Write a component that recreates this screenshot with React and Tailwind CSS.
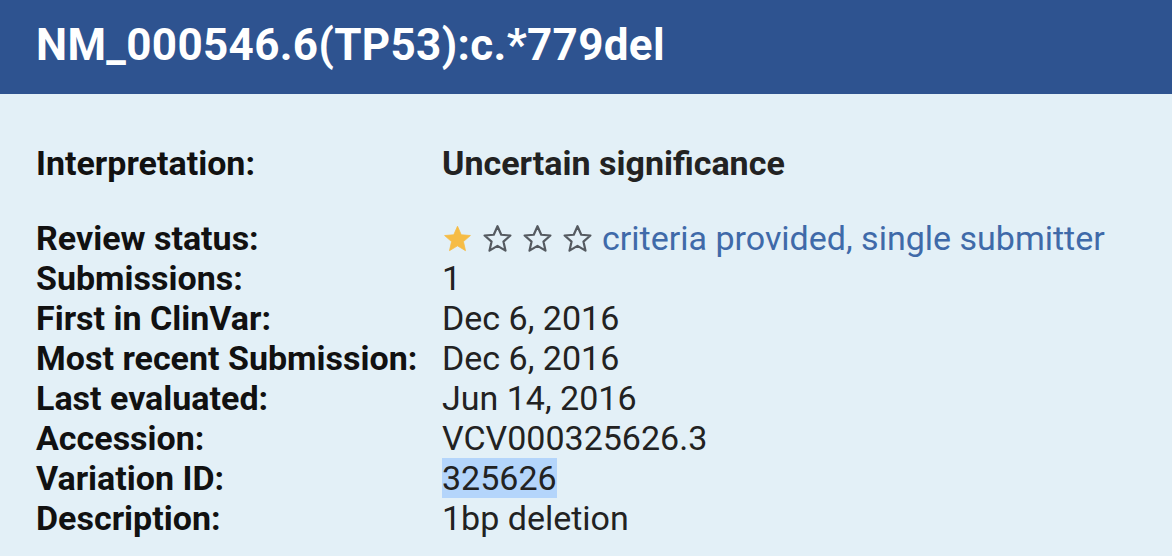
const Star = ({ filled }) => (
    <svg width="31" height="31" viewBox="0 0 24 24" className="shrink-0">
        <path
            d="M12 2.5l2.9 6.6 7.1.6-5.4 4.7 1.6 7-6.2-3.7-6.2 3.7 1.6-7L2 9.7l7.1-.6z"
            fill={filled ? '#f6bc45' : 'none'}
            stroke={filled ? '#f6bc45' : '#555a60'}
            strokeWidth={filled ? 0.6 : 1.7}
            strokeLinejoin="round"
        />
    </svg>
)

const rows = [
    ['Submissions:', '1'],
    ['First in ClinVar:', 'Dec 6, 2016'],
    ['Most recent Submission:', 'Dec 6, 2016'],
    ['Last evaluated:', 'Jun 14, 2016'],
    ['Accession:', 'VCV000325626.3'],
]

export default function App() {
    return (
        <div className="w-[1172px] h-[556px] bg-[#e3f0f7] overflow-hidden" style={{ fontFamily: 'Roboto, sans-serif' }}>
            {/* Title bar */}
            <div className="h-[94px] bg-[#2e5390] px-[36px] flex items-start pt-[17px]">
                <h1 className="text-white text-[44px] font-bold leading-[56px] tracking-[0.35px]">
                    NM_000546.6(TP53):c.*779del
                </h1>
            </div>

            <div className="px-[36px] pt-[49px] text-[34px] leading-[40px]">
                <div className="grid grid-cols-[406px_1fr]">
                    <div className="font-bold text-[#111]">Interpretation:</div>
                    <div className="font-bold text-[#222]">Uncertain significance</div>
                </div>

                <div className="grid grid-cols-[406px_1fr] mt-[35px] text-[#222]">
                    <div className="font-bold text-[#111]">Review status:</div>
                    <div className="flex items-center gap-[9px]">
                        <Star filled />
                        <Star />
                        <Star />
                        <Star />
                        <a className="text-[#3f6aa9]">criteria provided, single submitter</a>
                    </div>

                    {rows.map(([label, value]) => (
                        <div key={label} className="contents">
                            <div className="font-bold text-[#111]">{label}</div>
                            <div>{value}</div>
                        </div>
                    ))}

                    <div className="font-bold text-[#111]">Variation ID:</div>
                    <div>
                        <span className="bg-[#b4d5fb] inline-block">325626</span>
                    </div>

                    <div className="font-bold text-[#111]">Description:</div>
                    <div>1bp deletion</div>
                </div>
            </div>
        </div>
    )
}
